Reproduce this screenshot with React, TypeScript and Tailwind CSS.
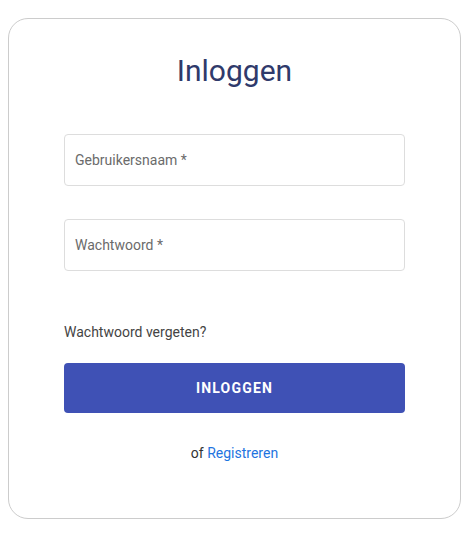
export default function App() {
	return (
		<div
			className="w-[475px] h-[559px] bg-white pt-[18px] pl-[8px]"
			style={{ fontFamily: "Roboto, 'Liberation Sans', sans-serif" }}
		>
			<div className="w-[453px] h-[501px] rounded-[20px] border border-[#cccccc] px-[55px] pt-[32px]">
				<h1 className="text-center text-[30px] leading-[40px] text-[#2f3a6b]">
					Inloggen
				</h1>

				<div className="mt-[43px] h-[52px] rounded-[4px] border border-[#dddddd] flex items-center px-[10px]">
					<span className="text-[14px] text-[#6b6b6b]">
						Gebruikersnaam *
					</span>
				</div>

				<div className="mt-[33px] h-[52px] rounded-[4px] border border-[#dddddd] flex items-center px-[10px]">
					<span className="text-[14px] text-[#6b6b6b]">Wachtwoord *</span>
				</div>

				<p className="mt-[51px] text-[14px] leading-[20px] text-[#444444]">
					Wachtwoord vergeten?
				</p>

				<button className="mt-[21px] w-full h-[50px] rounded-[4px] bg-[#3f51b5] text-white text-[14px] font-bold tracking-[1.2px]">
					INLOGGEN
				</button>

				<p className="mt-[30px] text-center text-[14px] leading-[20px] text-[#333333]">
					of <span className="text-[#1e74e0]">Registreren</span>
				</p>
			</div>
		</div>
	);
}
